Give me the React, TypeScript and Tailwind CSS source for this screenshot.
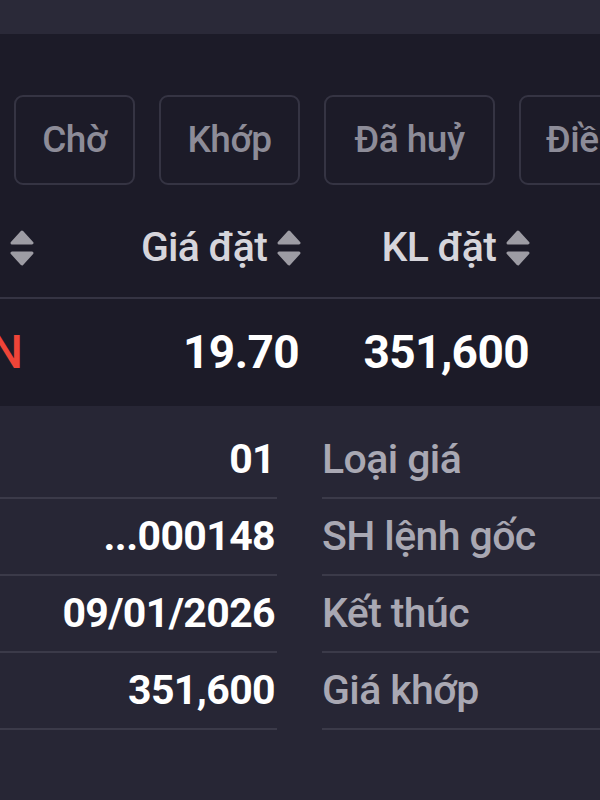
import React from 'react';

const SortIcon = () => (
  <svg width="24" height="36" viewBox="0 0 24 36" className="shrink-0">
    <polygon points="12,2 22,13 2,13" fill="#9d9ca4" stroke="#9d9ca4" strokeWidth="3" strokeLinejoin="round" />
    <polygon points="2,23 22,23 12,34" fill="#9d9ca4" stroke="#9d9ca4" strokeWidth="3" strokeLinejoin="round" />
  </svg>
);

const tabs = [
  { label: 'Chờ', w: 'w-[121px] justify-center' },
  { label: 'Khớp', w: 'w-[141px] justify-center' },
  { label: 'Đã huỷ', w: 'w-[171px] justify-center' },
  { label: 'Điều chỉnh', w: 'w-[200px] justify-start pl-[25px]' },
];

const details = [
  { value: '01', label: 'Loại giá' },
  { value: '...000148', label: 'SH lệnh gốc' },
  { value: '09/01/2026', label: 'Kết thúc' },
  { value: '351,600', label: 'Giá khớp' },
];

export default function App() {
  return (
    <div className="w-[600px] h-[800px] overflow-hidden flex flex-col bg-[#272635] font-['Roboto',sans-serif]">
      {/* top strip */}
      <div className="h-[34px] shrink-0 bg-[#2a2938]" />

      {/* order list */}
      <div className="h-[372px] shrink-0 bg-[#1c1b28] flex flex-col">
        {/* status tabs */}
        <div className="mt-[61px] flex gap-[24px] pl-[14px]">
          {tabs.map((t) => (
            <div
              key={t.label}
              className={`${t.w} h-[90px] shrink-0 rounded-[9px] border-2 border-[#353443] flex items-center overflow-hidden`}
            >
              <span className="text-[37px] font-medium text-[#8d8c98] whitespace-nowrap tracking-[-0.5px]">{t.label}</span>
            </div>
          ))}
        </div>

        {/* column headers */}
        <div className="flex h-[114px] pt-[14px] items-center border-b-2 border-[#353443]">
          <div className="w-[34px] shrink-0 flex justify-end items-center gap-[10px] whitespace-nowrap">
            <span className="text-[41px] font-medium text-[#d6d5db]">Lệnh</span>
            <SortIcon />
          </div>
          <div className="w-[267px] shrink-0 flex justify-end items-center gap-[10px]">
            <span className="text-[41px] font-medium text-[#d6d5db] tracking-[-0.8px]">Giá đặt</span>
            <SortIcon />
          </div>
          <div className="w-[229px] shrink-0 flex justify-end items-center gap-[10px]">
            <span className="text-[41px] font-medium text-[#d6d5db] tracking-[-0.8px]">KL đặt</span>
            <SortIcon />
          </div>
        </div>

        {/* order row */}
        <div className="flex flex-1 items-center">
          <div className="w-[23px] shrink-0 flex justify-end whitespace-nowrap">
            <span className="text-[46px] font-medium text-[#ef4438]">BÁN</span>
          </div>
          <div className="w-[276px] shrink-0 flex justify-end">
            <span className="text-[46px] font-bold text-white tracking-[-0.6px]">19.70</span>
          </div>
          <div className="w-[230px] shrink-0 flex justify-end">
            <span className="text-[46px] font-bold text-white tracking-[-0.6px]">351,600</span>
          </div>
        </div>
      </div>

      {/* order details */}
      <div className="pt-[16px] flex flex-col">
        {details.map((d) => (
          <div key={d.label} className="flex gap-[45px] h-[77px]">
            <div className="w-[277px] shrink-0 flex items-center justify-end pr-[2px] border-b-2 border-[#3b3a49]">
              <span className="text-[41px] font-bold text-white tracking-[-0.6px]">{d.value}</span>
            </div>
            <div className="flex-1 flex items-center border-b-2 border-[#3b3a49]">
              <span className="text-[41px] font-medium text-[#a9a8b3] tracking-[-0.6px]">{d.label}</span>
            </div>
          </div>
        ))}
      </div>
    </div>
  );
}
